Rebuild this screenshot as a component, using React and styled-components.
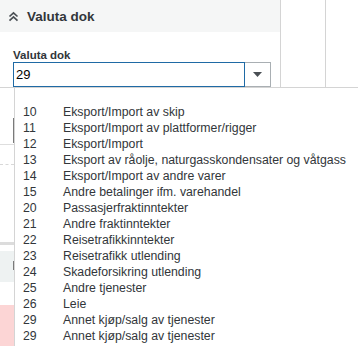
import React from "react";
import styled, { createGlobalStyle } from "styled-components";

const GlobalStyle = createGlobalStyle`
  html, body {
    margin: 0;
    padding: 0;
    background: #fff;
  }
  body {
    font-family: "Liberation Sans", Arial, sans-serif;
    color: #32363a;
  }
`;

const Page = styled.div`
  position: relative;
  width: 358px;
  height: 346px;
  overflow: hidden;
  background: #fff;
`;

const TopRow = styled.div`
  display: flex;
  height: 87px;
  border-bottom: 1px solid #d4d4d4;
`;

const Panel = styled.section`
  width: 281px;
  border-right: 1px solid #d4d4d4;
  display: flex;
  flex-direction: column;
`;

const PanelHeader = styled.div`
  height: 32px;
  background: #f5f6f6;
  display: flex;
  align-items: center;
  gap: 8px;
  padding-left: 8px;
`;

const HeaderTitle = styled.h2`
  margin: 0;
  font-size: 13.5px;
  font-weight: bold;
  color: #32363a;
`;

const PanelBody = styled.div`
  padding: 17px 0 0 13px;
`;

const Label = styled.div`
  font-size: 11.5px;
  font-weight: bold;
  color: #32363a;
  line-height: 12px;
  margin-bottom: 1px;
`;

const Combo = styled.div`
  display: flex;
  height: 25px;
`;

const Input = styled.div`
  width: 228px;
  border: 1px solid #1f6aa5;
  display: flex;
  align-items: center;
  padding-left: 2px;
  font-size: 13px;
  color: #000;
`;

const DropButton = styled.div`
  width: 25px;
  border: 1px solid #a9afb3;
  border-left: none;
  display: flex;
  align-items: center;
  justify-content: center;
  background: #fff;
`;

const Column = styled.div`
  width: ${(p) => p.w}px;
  border-right: ${(p) => (p.last ? "none" : "1px solid #d4d4d4")};
`;

const Strip = styled.div`
  width: 14px;
  display: flex;
  flex-direction: column;
`;

const StripBlock = styled.div`
  height: 57px;
  border-bottom: 1px solid #dedede;
  display: flex;
  justify-content: flex-end;
  padding-top: 30px;
  box-sizing: border-box;
`;

const DarkMark = styled.div`
  width: 1px;
  height: ${(p) => p.h}px;
  background: #7a7a7a;
`;

const Dashed = styled.div`
  margin-top: 19px;
  border-top: 1px dashed #d8d8d8;
`;

const GreyBand = styled.div`
  margin-top: 77px;
  height: 3px;
  background: #dcdcdc;
`;

const SoftBand = styled.div`
  margin-top: 6px;
  height: 31px;
  background: #eef2f2;
  display: flex;
  justify-content: flex-end;
  padding-top: 10px;
  box-sizing: border-box;
`;

const PinkBand = styled.div`
  margin-top: 23px;
  height: 60px;
  background: #fcd5d5;
`;

const List = styled.ul`
  position: absolute;
  top: 87px;
  left: 14px;
  right: -4px;
  bottom: -4px;
  margin: 0;
  padding: 0;
  list-style: none;
  background: #fff;
  border: 1px solid #d4d4d4;
`;

const Item = styled.li`
  display: flex;
  height: 16px;
  align-items: center;
  padding-left: 8px;
  font-size: 12.3px;
  color: #32363a;
  white-space: nowrap;
`;

const Code = styled.span`
  width: 40px;
`;

const options = [
  ["", ""],
  ["10", "Eksport/Import av skip"],
  ["11", "Eksport/Import av plattformer/rigger"],
  ["12", "Eksport/Import"],
  ["13", "Eksport av råolje, naturgasskondensater og våtgass"],
  ["14", "Eksport/Import av andre varer"],
  ["15", "Andre betalinger ifm. varehandel"],
  ["20", "Passasjerfraktinntekter"],
  ["21", "Andre fraktinntekter"],
  ["22", "Reisetrafikkinntekter"],
  ["23", "Reisetrafikk utlending"],
  ["24", "Skadeforsikring utlending"],
  ["25", "Andre tjenester"],
  ["26", "Leie"],
  ["29", "Annet kjøp/salg av tjenester"],
  ["29", "Annet kjøp/salg av tjenester"],
];

function CollapseIcon() {
  return (
    <svg width="11" height="11" viewBox="0 0 11 11" fill="none" stroke="#4a4f54" strokeWidth="1.7">
      <polyline points="1.5,5.5 5.5,1.8 9.5,5.5" />
      <polyline points="1.5,9.6 5.5,5.9 9.5,9.6" />
    </svg>
  );
}

function Caret() {
  return (
    <svg width="9" height="5" viewBox="0 0 9 5">
      <polygon points="0,0 9,0 4.5,5" fill="#4a4f54" />
    </svg>
  );
}

export default function App() {
  return (
    <Page>
      <GlobalStyle />
      <TopRow>
        <Panel>
          <PanelHeader>
            <CollapseIcon />
            <HeaderTitle>Valuta dok</HeaderTitle>
          </PanelHeader>
          <PanelBody>
            <Label>Valuta dok</Label>
            <Combo>
              <Input>29</Input>
              <DropButton>
                <Caret />
              </DropButton>
            </Combo>
          </PanelBody>
        </Panel>
        <Column w={44} />
        <Column w={32} last />
      </TopRow>
      <Strip>
        <StripBlock>
          <DarkMark h={25} />
        </StripBlock>
        <Dashed />
        <GreyBand />
        <SoftBand>
          <DarkMark h={9} />
        </SoftBand>
        <PinkBand />
      </Strip>
      <List>
        {options.map(([code, text], i) => (
          <Item key={i}>
            <Code>{code}</Code>
            {text}
          </Item>
        ))}
      </List>
    </Page>
  );
}
